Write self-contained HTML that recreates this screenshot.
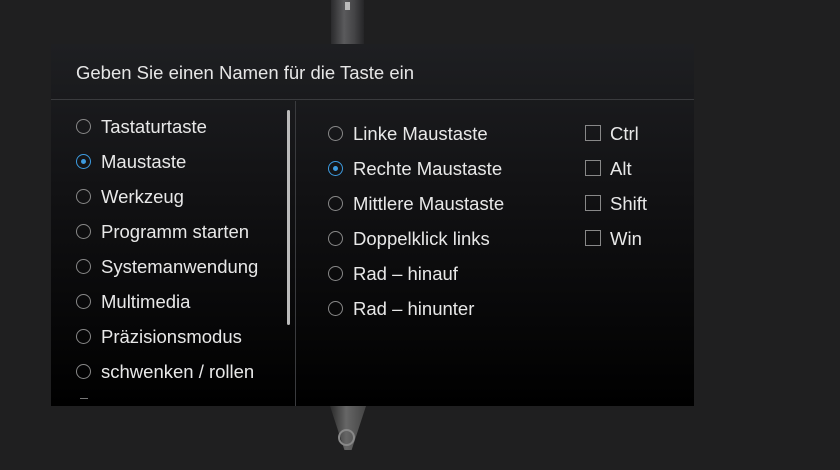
<!DOCTYPE html>
<html><head><style>
*{margin:0;padding:0;box-sizing:border-box}
body{width:840px;height:470px;background:#1f1f20;position:relative;overflow:hidden;font-family:"Liberation Sans",sans-serif;color:#e8e8e8}
.pen{position:absolute;left:331px;top:0;width:33px;height:44px;background:linear-gradient(90deg,#2a2a2c,#5a5a5c 40%,#454547 70%,#252527)}
.pen:after{content:"";position:absolute;left:14px;top:2px;width:5px;height:8px;background:#bbb}
.tip{position:absolute;left:330px;top:406px;width:36px;height:44px;background:linear-gradient(90deg,#2a2a2a,#666 45%,#444);clip-path:polygon(0 0,100% 0,60% 100%,40% 100%)}
.ring{position:absolute;left:338px;top:429px;width:17px;height:17px;border:2px solid #888;border-radius:50%}
.dlg{position:absolute;left:51px;top:44px;width:643px;height:362px;background:linear-gradient(#1e1f22,#121214 40%,#000);}
.hd{position:absolute;left:0;top:0;width:100%;height:56px;border-bottom:1px solid #3a3b3e;font-size:18.5px;padding:18px 0 0 25px;color:#e6e6e6}
.div{position:absolute;left:244px;top:57px;width:1px;height:305px;background:#3a3b3e}
.sb{position:absolute;left:236px;top:66px;width:3px;height:215px;background:#bbb;border-radius:2px}
.it{position:absolute;font-size:18.5px;height:20px;line-height:20px;white-space:nowrap}
.r{position:absolute;width:15px;height:15px;border:1.5px solid #888;border-radius:50%}
.r.on{border-color:#3d9be0}
.r.on:after{content:"";position:absolute;left:3.5px;top:3.5px;width:5px;height:5px;border-radius:50%;background:#3d9be0}
.c{position:absolute;width:16px;height:16px;border:1.5px solid #888}
</style></head><body>
<div class="pen"></div>
<div class="tip"></div><div class="ring"></div>
<div class="dlg">
<div class="hd">Geben Sie einen Namen für die Taste ein</div>
<div class="div"></div><div class="sb"></div>
</div>
<div class="r" style="left:76px;top:119px"></div><div class="it" style="left:101px;top:117px">Tastaturtaste</div>
<div class="r on" style="left:76px;top:154px"></div><div class="it" style="left:101px;top:152px">Maustaste</div>
<div class="r" style="left:76px;top:189px"></div><div class="it" style="left:101px;top:187px">Werkzeug</div>
<div class="r" style="left:76px;top:224px"></div><div class="it" style="left:101px;top:222px">Programm starten</div>
<div class="r" style="left:76px;top:259px"></div><div class="it" style="left:101px;top:257px">Systemanwendung</div>
<div class="r" style="left:76px;top:294px"></div><div class="it" style="left:101px;top:292px">Multimedia</div>
<div class="r" style="left:76px;top:329px"></div><div class="it" style="left:101px;top:327px">Präzisionsmodus</div>
<div class="r" style="left:76px;top:364px"></div><div class="it" style="left:101px;top:362px">schwenken / rollen</div>
<div style="position:absolute;left:80px;top:398px;width:8px;height:1px;background:#777"></div>
<div class="r" style="left:328px;top:126px"></div><div class="it" style="left:353px;top:124px">Linke Maustaste</div>
<div class="r on" style="left:328px;top:161px"></div><div class="it" style="left:353px;top:159px">Rechte Maustaste</div>
<div class="r" style="left:328px;top:196px"></div><div class="it" style="left:353px;top:194px">Mittlere Maustaste</div>
<div class="r" style="left:328px;top:231px"></div><div class="it" style="left:353px;top:229px">Doppelklick links</div>
<div class="r" style="left:328px;top:266px"></div><div class="it" style="left:353px;top:264px">Rad – hinauf</div>
<div class="r" style="left:328px;top:301px"></div><div class="it" style="left:353px;top:299px">Rad – hinunter</div>
<div class="c" style="left:585px;top:125px"></div><div class="it" style="left:610px;top:124px">Ctrl</div>
<div class="c" style="left:585px;top:160px"></div><div class="it" style="left:610px;top:159px">Alt</div>
<div class="c" style="left:585px;top:195px"></div><div class="it" style="left:610px;top:194px">Shift</div>
<div class="c" style="left:585px;top:230px"></div><div class="it" style="left:610px;top:229px">Win</div>
</body></html>
